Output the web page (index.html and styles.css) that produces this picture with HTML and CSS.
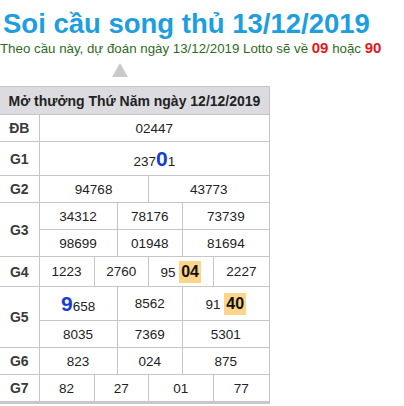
FILE: index.html
```html
<!DOCTYPE html>
<html lang="vi">
<head>
<meta charset="utf-8">
<link rel="stylesheet" href="styles.css">
</head>
<body>
<h1 class="title">Soi cầu song thủ 13/12/2019</h1>
<div class="sub">Theo cầu này, dự đoán ngày 13/12/2019 Lotto sẽ về <b class="red">09</b> hoặc <b class="red">90</b></div>
<div class="arrow"></div>
<table class="kq">
  <colgroup>
    <col class="c0"><col class="c1"><col class="c2"><col class="c3"><col class="c4"><col class="c5"><col class="c6">
  </colgroup>
  <tr class="hd"><th colspan="7">Mở thưởng Thứ Năm ngày 12/12/2019</th></tr>
  <tr class="r27"><td class="lb">ĐB</td><td colspan="6">02447</td></tr>
  <tr class="r34"><td class="lb">G1</td><td colspan="6">237<span class="big">0</span>1</td></tr>
  <tr class="r27"><td class="lb">G2</td><td colspan="3">94768</td><td colspan="3">43773</td></tr>
  <tr class="r27"><td class="lb" rowspan="2">G3</td><td colspan="2">34312</td><td colspan="2">78176</td><td colspan="2">73739</td></tr>
  <tr class="r27"><td colspan="2">98699</td><td colspan="2">01948</td><td colspan="2">81694</td></tr>
  <tr class="r30"><td class="lb">G4</td><td>1223</td><td colspan="2">2760</td><td colspan="2">95 <span class="hl">04</span></td><td>2227</td></tr>
  <tr class="r34"><td class="lb" rowspan="2">G5</td><td colspan="2"><span class="big">9</span>658</td><td colspan="2">8562</td><td colspan="2">91 <span class="hl">40</span></td></tr>
  <tr class="r27"><td colspan="2">8035</td><td colspan="2">7369</td><td colspan="2">5301</td></tr>
  <tr class="r27"><td class="lb">G6</td><td colspan="2">823</td><td colspan="2">024</td><td colspan="2">875</td></tr>
  <tr class="r28 last"><td class="lb">G7</td><td>82</td><td colspan="2">27</td><td colspan="2">01</td><td>77</td></tr>
</table>
</body>
</html>
```
FILE: styles.css
```css
body {
  margin: 0;
  font-family: "Liberation Sans", Arial, sans-serif;
  background: #fff;
}
.title {
  margin: 0;
  padding: 8px 0 0 3px;
  font-size: 27.5px;
  line-height: 32px;
  font-weight: bold;
  color: #1c9ee0;
}
.sub {
  height: 17px;
  font-size: 13.3px;
  line-height: 17px;
  color: #2f6a1d;
  white-space: nowrap;
}
.red {
  color: #e3161b;
  font-size: 15px;
  line-height: 1;
}
.arrow {
  width: 0;
  height: 0;
  margin: 6px 0 0 112px;
  border-left: 8px solid transparent;
  border-right: 8px solid transparent;
  border-bottom: 14px solid #c9c9c9;
}
.kq {
  margin-top: 9px;
  width: 270px;
  table-layout: fixed;
  border-collapse: collapse;
  font-size: 13.5px;
  color: #222;
}
.c0 { width: 39px; }
.c1 { width: 55px; }
.c2 { width: 23px; }
.c3 { width: 31px; }
.c4 { width: 34px; }
.c5 { width: 31px; }
.c6 { width: 56px; }
.kq th,
.kq td {
  padding: 0;
  border: 1px solid #c6c6c6;
  text-align: center;
  vertical-align: middle;
  white-space: nowrap;
}
.kq tr > :first-child { border-left: none; }
.kq .last td { border-bottom: 3px solid #c8c8c8; }
.hd th {
  height: 27px;
  background: #dcdce0;
  font-size: 14px;
  font-weight: bold;
  color: #222;
}
.r27 td { height: 26px; }
.r28 td { height: 26px; }
.r30 td { height: 29px; }
.r34 td { height: 33px; }
.lb {
  font-size: 14px;
  font-weight: bold;
  color: #3a3a3a;
}
.big {
  font-size: 21px;
  font-weight: bold;
  color: #1440d0;
}
.hl {
  display: inline-block;
  padding: 2px 2px;
  line-height: 18px;
  font-size: 16px;
  font-weight: bold;
  color: #111;
  background: #fcd48a;
}
```
